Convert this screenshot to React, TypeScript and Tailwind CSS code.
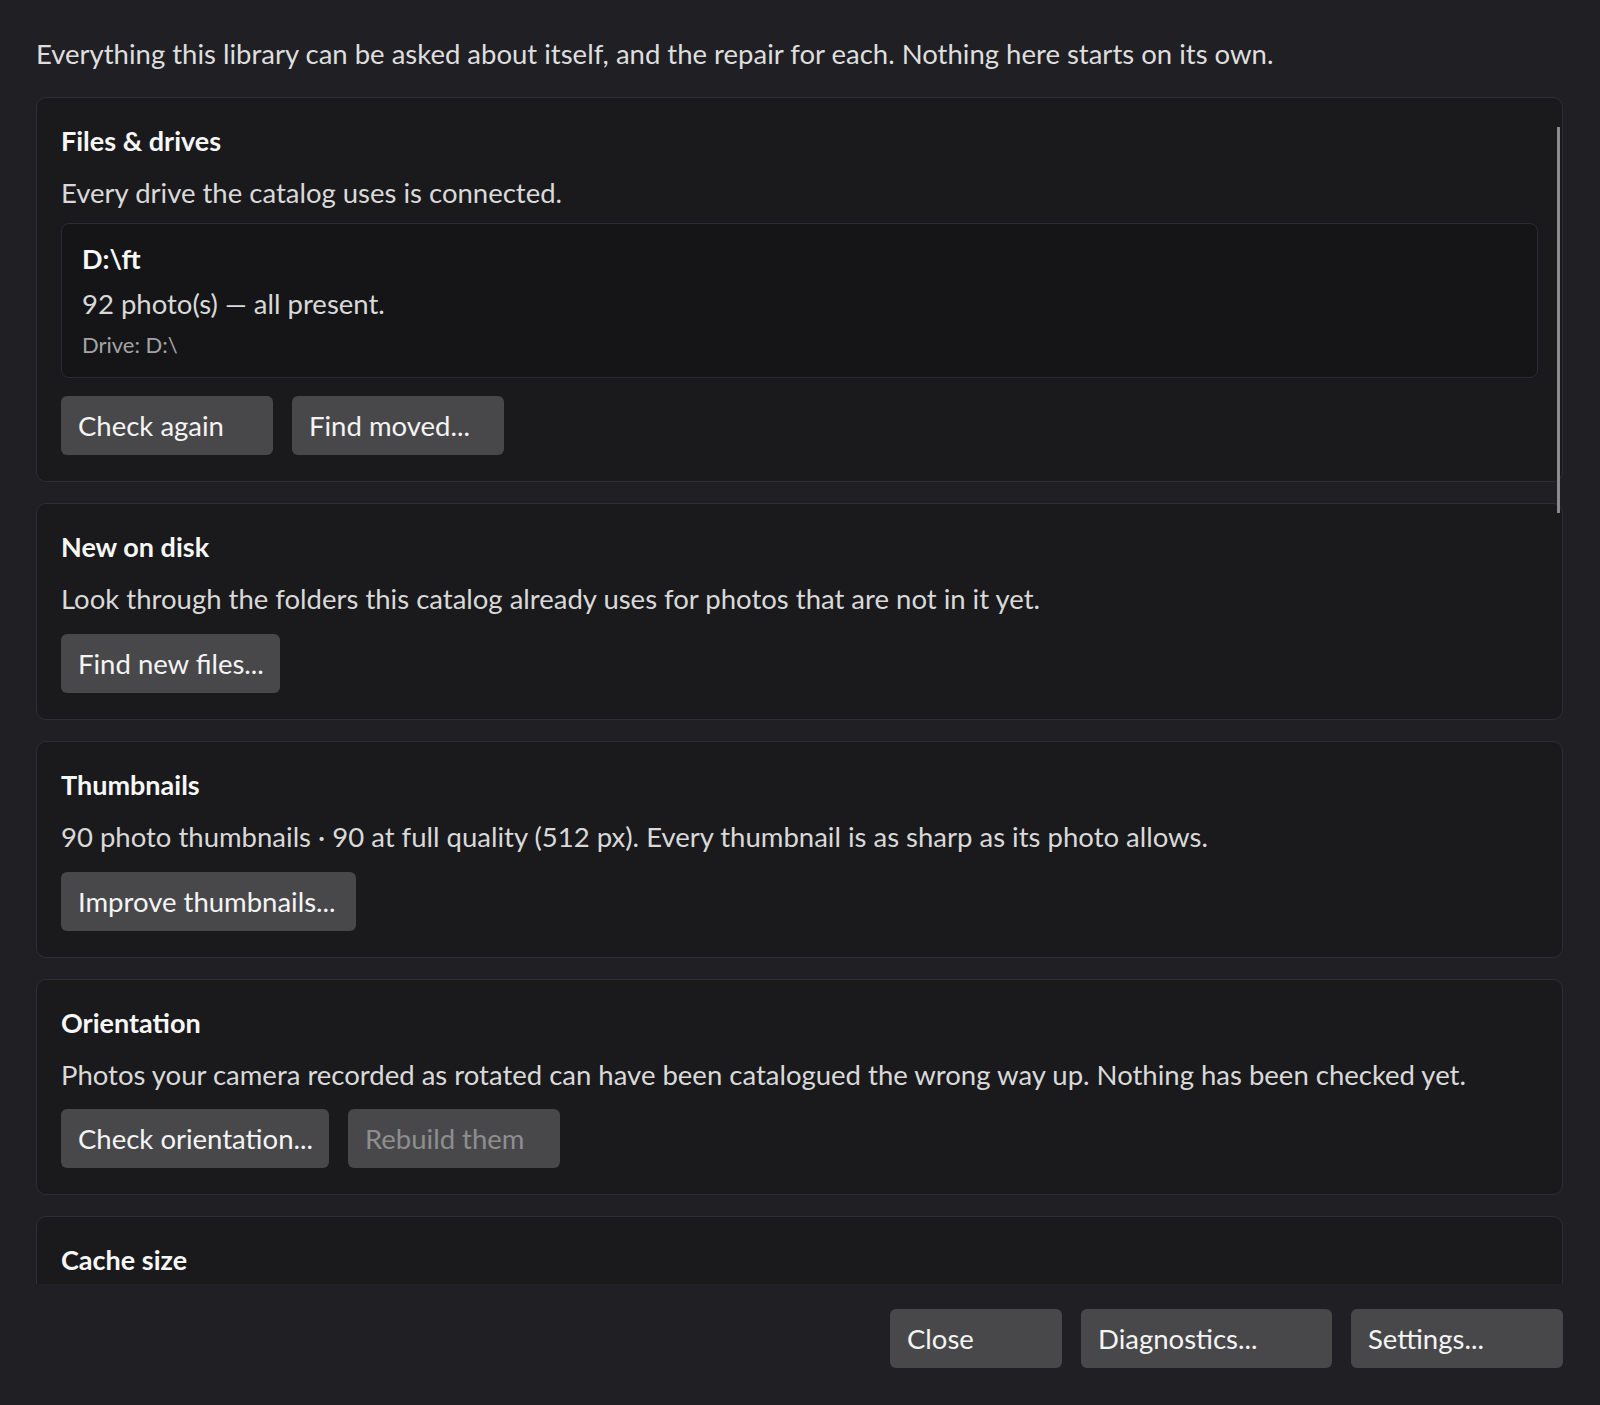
import React from 'react';

type Action = { label: string; w: string; disabled?: boolean };

const ActionButton: React.FC<Action> = ({ label, w, disabled }) => (
    <button
        className={`${w} h-[59px] shrink-0 rounded-[6px] bg-[#48484b] pl-[17px] text-left text-[27.5px] leading-[32px] ${disabled ? 'text-[#8e8e90]' : 'text-[#f4f4f4]'}`}
    >
        {label}
    </button>
);

const Card: React.FC<{ title: string; desc?: string; className?: string; children?: React.ReactNode }> = ({
    title,
    desc,
    className,
    children,
}) => (
    <section className={`shrink-0 rounded-[10px] border border-[#2e2e33] bg-[#1a1a1d] px-[24px] pt-[27px] pb-[26px] ${className ?? ''}`}>
        <h2 className="text-[27px] font-bold leading-[32px] text-[#f7f7f7]">{title}</h2>
        {desc && <p className="mt-[20px] text-[27.5px] leading-[32px] text-[#d9d9d9]">{desc}</p>}
        {children}
    </section>
);

export default function App() {
    return (
        <div
            className="flex h-[1405px] w-[1600px] flex-col bg-[#202024]"
            style={{ fontFamily: 'Lato, "Open Sans", sans-serif' }}
        >
            {/* Scrollable check list */}
            <div className="relative h-[1284px] shrink-0 overflow-hidden pl-[36px] pr-[37px] pt-[37px]">
                <p className="text-[27.5px] leading-[34px] text-[#dedede]">
                    Everything this library can be asked about itself, and the repair for each. Nothing here starts on its own.
                </p>

                <div className="mt-[26px] flex flex-col gap-[21px]">
                    <Card title="Files & drives" desc="Every drive the catalog uses is connected.">
                        <div className="mt-[14px] rounded-[8px] border border-[#2b2b30] bg-[#151518] px-[20px] pt-[19px] pb-[18px]">
                            <div className="text-[27px] font-bold leading-[32px] text-[#f7f7f7]">D:\ft</div>
                            <div className="mt-[13px] text-[27.5px] leading-[32px] text-[#d9d9d9]">92 photo(s) — all present.</div>
                            <div className="mt-[11px] text-[22px] leading-[28px] text-[#a4a4a6]">Drive: D:\</div>
                        </div>
                        <div className="mt-[18px] flex gap-[19px]">
                            <ActionButton label="Check again" w="w-[212px]" />
                            <ActionButton label="Find moved..." w="w-[212px]" />
                        </div>
                    </Card>

                    <Card title="New on disk" desc="Look through the folders this catalog already uses for photos that are not in it yet.">
                        <div className="mt-[19px] flex gap-[19px]">
                            <ActionButton label="Find new files..." w="w-[219px]" />
                        </div>
                    </Card>

                    <Card
                        title="Thumbnails"
                        desc="90 photo thumbnails · 90 at full quality (512 px). Every thumbnail is as sharp as its photo allows."
                    >
                        <div className="mt-[19px] flex gap-[19px]">
                            <ActionButton label="Improve thumbnails..." w="w-[295px]" />
                        </div>
                    </Card>

                    <Card
                        title="Orientation"
                        desc="Photos your camera recorded as rotated can have been catalogued the wrong way up. Nothing has been checked yet."
                    >
                        <div className="mt-[18px] flex gap-[19px]">
                            <ActionButton label="Check orientation..." w="w-[268px]" />
                            <ActionButton label="Rebuild them" w="w-[212px]" disabled />
                        </div>
                    </Card>

                    {/* only the top of this card is in view */}
                    <Card title="Cache size" className="min-h-[200px]" />
                </div>

                {/* scrollbar thumb */}
                <div className="absolute left-[1557px] top-[127px] h-[386px] w-[3px] bg-[#8b8b8d]" />
            </div>

            {/* Footer */}
            <footer className="flex flex-1 items-start justify-end gap-[19px] pr-[37px] pt-[25px]">
                <ActionButton label="Close" w="w-[172px]" />
                <ActionButton label="Diagnostics..." w="w-[251px]" />
                <ActionButton label="Settings..." w="w-[212px]" />
            </footer>
        </div>
    );
}
